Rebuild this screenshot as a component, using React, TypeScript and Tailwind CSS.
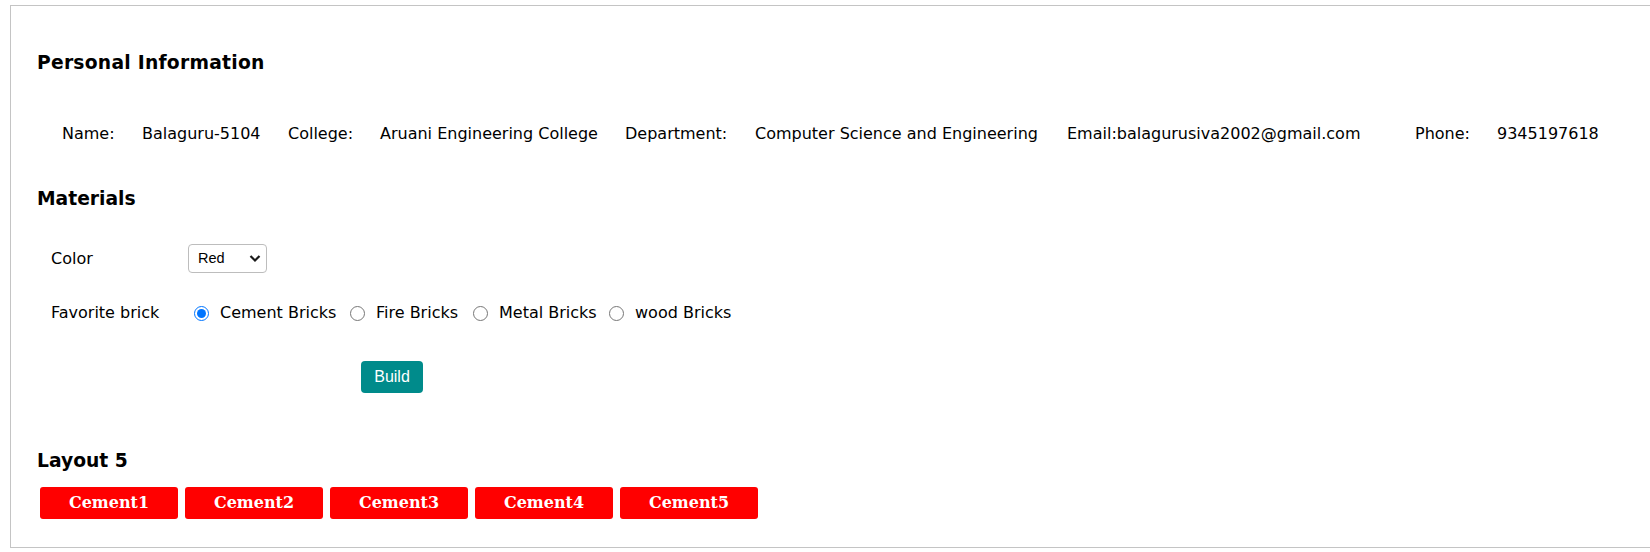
import { useState } from "react";

const info = [
  { text: "Name:", w: "w-[80px]" },
  { text: "Balaguru-5104", w: "w-[146px]" },
  { text: "College:", w: "w-[92px]" },
  { text: "Aruani Engineering College", w: "w-[245px]" },
  { text: "Department:", w: "w-[130px]" },
  { text: "Computer Science and Engineering", w: "w-[312px]" },
  { text: "Email:balagurusiva2002@gmail.com", w: "w-[348px]" },
  { text: "Phone:", w: "w-[82px]" },
  { text: "9345197618", w: "" },
];

const bricks = [
  { name: "Cement Bricks", w: "w-[117px]" },
  { name: "Fire Bricks", w: "w-[84px]" },
  { name: "Metal Bricks", w: "w-[97px]" },
  { name: "wood Bricks", w: "w-[97px]" },
];

const App = () => {
  const [brick, setBrick] = useState("Cement Bricks");
  const [color, setColor] = useState("Red");

  return (
    <div className="pt-[5px] pl-[10px] overflow-hidden bg-white font-['DejaVu_Sans',sans-serif] text-black">
      <div className="h-[543px] border-t border-l border-b border-[#c4c4c4] pl-[26px]">
        <h3 className="mt-[46px] text-[18.72px] leading-[22px] font-bold tracking-[0.25px]">Personal Information</h3>

        <div className="mt-[50px] ml-[25px] flex text-[16px] leading-[19px]">
          {info.map((item) => (
            <span key={item.text} className={`${item.w} shrink-0 whitespace-nowrap`}>
              {item.text}
            </span>
          ))}
        </div>

        <h3 className="mt-[45px] text-[18.72px] leading-[22px] font-bold">Materials</h3>

        <div className="mt-[34px] ml-[14px] flex items-center h-[29px] text-[16px]">
          <span className="w-[137px]">Color</span>
          <div className="relative w-[79px] h-[29px]">
            <select
              value={color}
              onChange={(e) => setColor(e.target.value)}
              className="appearance-none w-full h-full rounded-[4px] border border-[#bdbdbd] bg-white pl-[9px] text-[14.5px] font-['Liberation_Sans',sans-serif] text-black outline-none"
            >
              <option>Red</option>
              <option>Blue</option>
              <option>Green</option>
            </select>
            <svg
              className="pointer-events-none absolute right-[6px] top-[10px]"
              width="12"
              height="9"
              viewBox="0 0 12 9"
            >
              <path d="M1.5 2 L6 6.5 L10.5 2" fill="none" stroke="#1a1a1a" strokeWidth="2.2" />
            </svg>
          </div>
        </div>

        <div className="mt-[28px] ml-[14px] flex items-center h-[24px] text-[16px]">
          <span className="w-[143px]">Favorite brick</span>
          {bricks.map((b, i) => (
            <label key={b.name} className={`flex items-center ${i > 0 ? "ml-[13px]" : ""}`}>
              <input
                type="radio"
                name="brick"
                checked={brick === b.name}
                onChange={() => setBrick(b.name)}
                className="m-0 w-[15px] h-[15px] accent-[#0075ff]"
              />
              <span className={`ml-[11px] ${b.w} whitespace-nowrap`}>{b.name}</span>
            </label>
          ))}
        </div>

        <button className="mt-[36px] ml-[324px] block w-[62px] h-[32px] rounded-[4px] bg-[#008b8b] text-white text-[16px] font-['Liberation_Sans',sans-serif]">
          Build
        </button>

        <h3 className="mt-[57px] text-[18.72px] leading-[22px] font-bold">Layout 5</h3>

        <div className="mt-[15px] ml-[3px] flex gap-[7px]">
          {[1, 2, 3, 4, 5].map((n) => (
            <button
              key={n}
              className="w-[138px] h-[32px] rounded-[3px] bg-[#ff0000] text-white text-[16px] font-bold font-['DejaVu_Serif',serif]"
            >
              Cement{n}
            </button>
          ))}
        </div>
      </div>
    </div>
  );
};

export default App;
